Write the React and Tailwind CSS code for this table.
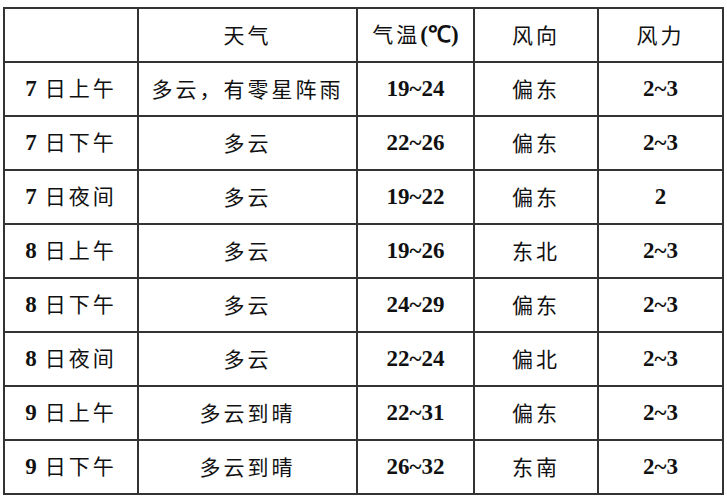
import React from 'react';

const rows = [
  { day: '7', part: '日上午', weather: '多云，有零星阵雨', temp: '19~24', dir: '偏东', force: '2~3' },
  { day: '7', part: '日下午', weather: '多云', temp: '22~26', dir: '偏东', force: '2~3' },
  { day: '7', part: '日夜间', weather: '多云', temp: '19~22', dir: '偏东', force: '2' },
  { day: '8', part: '日上午', weather: '多云', temp: '19~26', dir: '东北', force: '2~3' },
  { day: '8', part: '日下午', weather: '多云', temp: '24~29', dir: '偏东', force: '2~3' },
  { day: '8', part: '日夜间', weather: '多云', temp: '22~24', dir: '偏北', force: '2~3' },
  { day: '9', part: '日上午', weather: '多云到晴', temp: '22~31', dir: '偏东', force: '2~3' },
  { day: '9', part: '日下午', weather: '多云到晴', temp: '26~32', dir: '东南', force: '2~3' },
];

const cjk = "font-['Noto_Sans_CJK_SC',sans-serif] text-[21px] tracking-[3px] font-normal";
const num = "font-['Liberation_Serif',serif] font-bold text-[23px]";
const cell = 'border-2 border-[#333] text-center align-middle p-0';

function App() {
  return (
    <div className="w-[727px] h-[500px] bg-white pt-[7px] pl-[3px] text-[#111]">
      <table className="table-fixed border-collapse w-[719px]">
        <colgroup>
          <col className="w-[134px]" />
          <col className="w-[219px]" />
          <col className="w-[117px]" />
          <col className="w-[124px]" />
          <col className="w-[125px]" />
        </colgroup>
        <thead>
          <tr className="h-[54px]">
            <th className={cell}></th>
            <th className={cell}>
              <span className={cjk}>天气</span>
            </th>
            <th className={cell}>
              <span className={cjk}>气温</span>
              <span className={num}>(℃)</span>
            </th>
            <th className={cell}>
              <span className={cjk}>风向</span>
            </th>
            <th className={cell}>
              <span className={cjk}>风力</span>
            </th>
          </tr>
        </thead>
        <tbody>
          {rows.map((r, i) => (
            <tr key={i} className="h-[54px]">
              <td className={cell}>
                <span className={num}>{r.day}</span>
                <span className={cjk + ' ml-[8px]'}>{r.part}</span>
              </td>
              <td className={cell}>
                <span className={cjk}>{r.weather}</span>
              </td>
              <td className={cell}>
                <span className={num}>{r.temp}</span>
              </td>
              <td className={cell}>
                <span className={cjk}>{r.dir}</span>
              </td>
              <td className={cell}>
                <span className={num}>{r.force}</span>
              </td>
            </tr>
          ))}
        </tbody>
      </table>
    </div>
  );
}

export default App;
